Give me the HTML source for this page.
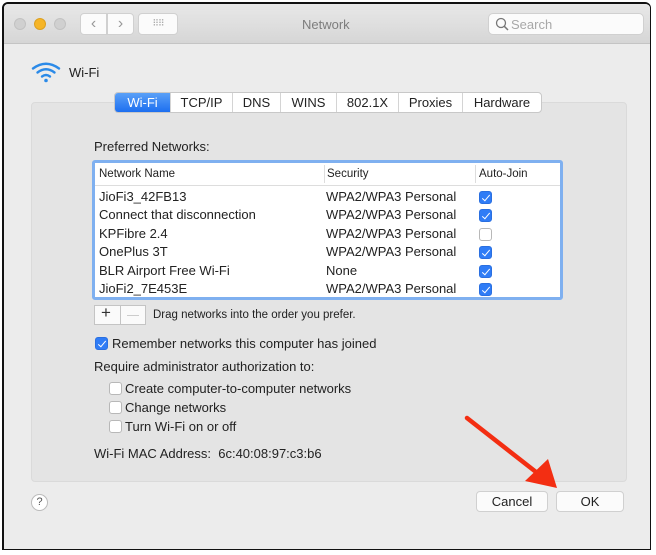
<!DOCTYPE html>
<html><head><meta charset="utf-8"><style>
*{margin:0;padding:0;box-sizing:border-box}
body{width:656px;height:555px;background:#fff;font-family:"Liberation Sans",sans-serif;font-size:13px;color:#222;position:relative;overflow:hidden}
.a{position:absolute}
.win{left:2px;top:2px;width:649px;height:548px;border:1px solid #111;border-top-width:2px;border-left-width:2px;background:#ececec;border-radius:6px 6px 0 0;overflow:hidden}
.tb{left:0;top:0;width:100%;height:40px;background:linear-gradient(#e8e8e8,#d6d6d6);border-bottom:1px solid #c4c4c4}
.dot{width:12px;height:12px;border-radius:50%;top:14px;background:#d0d0d0;border:1px solid #c2c2c2}
.btn{background:#fbfbfb;border:1px solid #d0d0d0;border-radius:4px}
.tabs{left:114px;top:92px;height:21px;display:flex;border:1px solid #c8c8c8;border-radius:4px;background:#fff;overflow:hidden;font-size:13px}
.tabs div{border-left:1px solid #d4d4d4;text-align:center;line-height:19px}
.tabs div:first-child{border:none;background:linear-gradient(#5aa0f7,#1d6ff0);color:#fff}
.panel{left:31px;top:102px;width:596px;height:380px;background:#e4e4e4;border:1px solid #dadada;border-radius:4px}
.tbl{left:92px;top:160px;width:471px;height:140px;border:3px solid #7fb0f0;border-radius:3px;background:#fff}
.row{position:absolute;left:4px;height:18px;line-height:18px;font-size:13px}
.cb{position:absolute;width:13px;height:13px;border-radius:3px;background:#fff;border:1px solid #b8b8b8}
.cb.on{background:#2f7cf6;border-color:#2a6fe0}
.cb.on::after{content:"";position:absolute;left:3.5px;top:1px;width:3px;height:7px;border:solid #fff;border-width:0 1.6px 1.6px 0;transform:rotate(40deg)}
.t{font-size:13px;position:absolute}
</style></head><body>
<div class="a win">
 <div class="a tb">
  <div class="a dot" style="left:10px"></div>
  <div class="a dot" style="left:30px;background:#f6b527;border-color:#dca021"></div>
  <div class="a dot" style="left:50px"></div>
  <div class="a btn" style="left:76px;top:9px;width:27px;height:22px;border-radius:4px 0 0 4px;color:#999;text-align:center;line-height:20px;font-size:16px">&#8249;</div>
  <div class="a btn" style="left:103px;top:9px;width:27px;height:22px;border-radius:0 4px 4px 0;color:#999;text-align:center;line-height:20px;font-size:16px">&#8250;</div>
  <div class="a btn" style="left:134px;top:9px;width:40px;height:22px;color:#aaa;text-align:center;line-height:19px;font-size:9px;letter-spacing:-1px">⠿⠿</div>
  <div class="a" style="left:298px;top:13px;color:#7d7d7d;font-size:13px">Network</div>
  <div class="a btn" style="left:484px;top:9px;width:156px;height:22px;border-radius:5px"></div>
  <svg class="a" style="left:491px;top:13px" width="14" height="14"><circle cx="6" cy="6" r="4.5" fill="none" stroke="#777" stroke-width="1.3"/><path d="M9.3 9.3L13 13" stroke="#777" stroke-width="1.5"/></svg>
  <div class="a" style="left:507px;top:13px;color:#a8a8a8;font-size:13px">Search</div>
 </div>
</div>
<svg class="a" style="left:31px;top:61px" width="30" height="22" viewBox="0 0 30 22"><g fill="none" stroke="#2b8ae8" stroke-width="2.4" stroke-linecap="round"><path d="M2 7.5Q15 -2 28 7.5"/><path d="M6.5 11.5Q15 5 23.5 11.5"/><path d="M11 15.5Q15 12.5 19 15.5"/></g><circle cx="15" cy="19.5" r="1.8" fill="#2b8ae8"/></svg>
<div class="a" style="left:69px;top:65px;font-size:13px">Wi-Fi</div>
<div class="a panel"></div>
<div class="a tabs">
 <div style="width:55px">Wi-Fi</div><div style="width:62px">TCP/IP</div><div style="width:48px">DNS</div><div style="width:56px">WINS</div><div style="width:62px">802.1X</div><div style="width:64px">Proxies</div><div style="width:79px">Hardware</div>
</div>
<div class="t" style="left:94px;top:139px">Preferred Networks:</div>
<div class="a tbl">
 <div class="a" style="left:0;top:0;width:100%;height:23px;border-bottom:1px solid #ddd;background:#fff"></div>
 <div class="a" style="left:229px;top:2px;width:1px;height:18px;background:#ddd"></div>
 <div class="a" style="left:380px;top:2px;width:1px;height:18px;background:#ddd"></div>
 <div class="a" style="left:4px;top:5px;font-size:11.5px">Network Name</div>
 <div class="a" style="left:232px;top:5px;font-size:11.5px">Security</div>
 <div class="a" style="left:384px;top:5px;font-size:11.5px">Auto-Join</div>
</div>
<div class="a" style="left:95px;top:188px;width:465px;height:110px">
 <div class="row" style="top:0">JioFi3_42FB13</div>
 <div class="row" style="top:18.4px">Connect that disconnection</div>
 <div class="row" style="top:36.8px">KPFibre 2.4</div>
 <div class="row" style="top:55.2px">OnePlus 3T</div>
 <div class="row" style="top:73.6px">BLR Airport Free Wi-Fi</div>
 <div class="row" style="top:92px">JioFi2_7E453E</div>
 <div class="row" style="top:0;left:231px">WPA2/WPA3 Personal</div>
 <div class="row" style="top:18.4px;left:231px">WPA2/WPA3 Personal</div>
 <div class="row" style="top:36.8px;left:231px">WPA2/WPA3 Personal</div>
 <div class="row" style="top:55.2px;left:231px">WPA2/WPA3 Personal</div>
 <div class="row" style="top:73.6px;left:231px">None</div>
 <div class="row" style="top:92px;left:231px">WPA2/WPA3 Personal</div>
 <div class="cb on" style="left:384px;top:3px"></div>
 <div class="cb on" style="left:384px;top:21.4px"></div>
 <div class="cb" style="left:384px;top:39.8px"></div>
 <div class="cb on" style="left:384px;top:58.2px"></div>
 <div class="cb on" style="left:384px;top:76.6px"></div>
 <div class="cb on" style="left:384px;top:95px"></div>
</div>
<div class="a" style="left:94px;top:305px;width:52px;height:20px;border:1px solid #c4c4c4;background:#fafafa"></div>
<div class="a" style="left:120px;top:305px;width:1px;height:20px;background:#c4c4c4"></div>
<div class="a" style="left:101px;top:303px;font-size:17px;color:#333">+</div>
<div class="a" style="left:127px;top:315px;width:12px;height:1px;background:#ccc"></div>
<div class="a" style="left:153px;top:309px;font-size:11.5px">Drag networks into the order you prefer.</div>
<div class="cb on" style="left:95px;top:337px"></div>
<div class="t" style="left:112px;top:336px">Remember networks this computer has joined</div>
<div class="t" style="left:94px;top:359px">Require administrator authorization to:</div>
<div class="cb" style="left:109px;top:382px"></div>
<div class="t" style="left:125px;top:381px">Create computer-to-computer networks</div>
<div class="cb" style="left:109px;top:401px"></div>
<div class="t" style="left:125px;top:400px">Change networks</div>
<div class="cb" style="left:109px;top:420px"></div>
<div class="t" style="left:125px;top:419px">Turn Wi-Fi on or off</div>
<div class="t" style="left:94px;top:446px">Wi-Fi MAC Address:&nbsp; 6c:40:08:97:c3:b6</div>
<div class="a" style="left:31px;top:494px;width:17px;height:17px;border-radius:50%;border:1px solid #bbb;background:#fff;text-align:center;line-height:15px;font-size:11px;color:#555">?</div>
<div class="a btn" style="left:476px;top:491px;width:72px;height:21px;text-align:center;line-height:19px;font-size:13px">Cancel</div>
<div class="a btn" style="left:556px;top:491px;width:68px;height:21px;text-align:center;line-height:19px;font-size:13px">OK</div>
<svg class="a" style="left:0;top:0" width="656" height="555"><path d="M467 418L536 472" stroke="#f32e12" stroke-width="4.5" stroke-linecap="round"/><path d="M557 488L525 481L548 459Z" fill="#f32e12"/></svg>
</body></html>
